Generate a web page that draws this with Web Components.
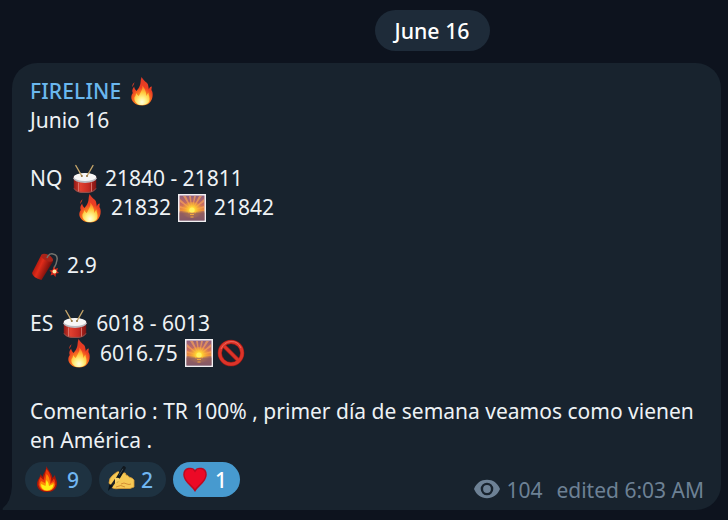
<!DOCTYPE html>
<html lang="es"><head><meta charset="utf-8"><title>FIRELINE</title>
<style>
html,body{margin:0;height:100%;background:#0d131e;overflow:hidden}
body{font-family:"Noto Sans","Open Sans",sans-serif;font-size:21px;color:#eef2f5}
</style></head><body>
<chat-view></chat-view>
<script>
const ICONS={
fire:`<svg viewBox="0 0 28 30"><defs><radialGradient id="f" gradientUnits="userSpaceOnUse" cx="14" cy="24" r="21"><stop offset="0" stop-color="#ffb52c"/><stop offset=".35" stop-color="#fb8020"/><stop offset=".6" stop-color="#ec3f22"/><stop offset="1" stop-color="#e03a26"/></radialGradient><radialGradient id="g" gradientUnits="userSpaceOnUse" cx="14" cy="26" r="15"><stop offset="0" stop-color="#fffde0"/><stop offset=".3" stop-color="#fff28a"/><stop offset=".65" stop-color="#ffc73a"/><stop offset="1" stop-color="#fb7a28"/></radialGradient></defs><g transform="translate(1.100 0) scale(.92 1)"><path fill="url(#f)" d="M13.500 1C12 5 13 7 11.500 10 10.500 12 9.500 13.500 8 15 7 13.500 5.500 12.500 5.500 10.500 3.500 13 3 15 4 17 1.500 20 2 24 5 26.500 8 30 19 30.500 22 27 26 24 26.500 17 24.500 14.500 24 13.500 24.500 12 24.800 10.500 23 10.500 22 11.800 21.500 13.500 21 11 21 8.500 19.500 7 16.500 5 15 3 13.500 1zM3.500 11Q3 8 6 6.300 5 9 3.500 11z"/><path fill="url(#g)" d="M14.500 9.500Q15 13 12.500 16.500L10.500 20Q8.500 19 8 17 7 20 6 21C5 24 7 27 10 28.500 14 30 21 28.500 22 25 23 22 21 19 21 16.500Q19.500 18 18.800 20 18.500 14 14.500 9.500z"/></g></svg>`,
drum:`<svg viewBox="0 0 28 30"><defs><linearGradient id="r"><stop stop-color="#8f1a17"/><stop offset=".3" stop-color="#e0402f"/><stop offset=".65" stop-color="#c62b22"/><stop offset="1" stop-color="#7d1514"/></linearGradient></defs><path fill="url(#r)" d="M2.800 12v12.500q2 4.500 11.200 4.500t11.200-4.500V12z"/><path d="M3 24.300q2 4.200 11 4.200t11-4.200" fill="none" stroke="#8a5350" stroke-width="1"/><ellipse cx="14" cy="14.200" rx="11.700" ry="4.700" fill="#b9bac0"/><ellipse cx="14" cy="13" rx="11.300" ry="4" fill="#f7f7f7"/><path d="M7.500 18.500v9M20.500 18.500v9" stroke="#df8078" stroke-width=".8"/><path d="M4.800 1.500L10.800 12M22 1.500L16 12" stroke="#c6a66a" stroke-width="1.400" stroke-linecap="round"/><circle cx="10.800" cy="12" r="1" fill="#927342"/><circle cx="16" cy="12" r="1" fill="#927342"/></svg>`,
sun:`<svg viewBox="0 0 28 28"><defs><linearGradient id="s" x2="0" y2="1"><stop stop-color="#8f607f"/><stop offset=".35" stop-color="#c86c61"/><stop offset=".63" stop-color="#f09437"/><stop offset=".64" stop-color="#b67257"/><stop offset="1" stop-color="#6d5778"/></linearGradient><radialGradient id="u" gradientUnits="userSpaceOnUse" cx="14" cy="16" r="11"><stop stop-color="#fff45b"/><stop offset=".3" stop-color="#ffd233"/><stop offset="1" stop-color="#ff9b29" stop-opacity="0"/></radialGradient></defs><path fill="#f2f0f2" d="M0 0h28v28H0z"/><path fill="url(#s)" d="M1.500 1.500h25v25h-25z"/><path d="M14 16L2 5v3zM14 16L5 2h3zM14 16L11 2h2zM14 16L16 2h2zM14 16L21 2h3zM14 16L26 5v3zM14 16L2 12v2zM14 16l12-4v2z" fill="#ffa653" opacity=".65"/><ellipse cx="14" cy="16" rx="11" ry="8" fill="url(#u)"/><path fill="#8c5a62" opacity=".75" d="M1.500 18.500h25v8h-25z"/><path stroke="#f4a640" stroke-width="1" d="M10 18.700h8M12 20.500h4M12.500 23h3"/><circle cx="14" cy="16" r="2.600" fill="#fff260"/></svg>`,
dynamite:`<svg viewBox="0 0 28 28"><defs><linearGradient id="d" gradientUnits="userSpaceOnUse" x1="4" y1="12" x2="17" y2="18"><stop stop-color="#a9150d"/><stop offset=".4" stop-color="#e02c1a"/><stop offset="1" stop-color="#79100d"/></linearGradient></defs><path fill="url(#d)" d="M10.500 2.500L1 21q1 5 9.500 7L22 9.500z"/><ellipse cx="16.200" cy="5.800" rx="6.400" ry="3.100" transform="rotate(27 16.200 5.800)" fill="#a92419"/><path d="M16 6Q18 1 22 2q5 1 4 6-.5 4-3 8" fill="none" stroke="#74736d" stroke-width="1.500"/><path fill="#db2a1b" d="M23 14l1 3 3-1-1 3 2 2-3 .5-.5 3.500-2-2.500-3 1 1-3-2-2 3-.5z"/><circle cx="23.500" cy="19.500" r="2" fill="#ffe8a5"/></svg>`,
no:`<svg viewBox="0 0 28 28"><circle cx="14" cy="14" r="11.200" fill="none" stroke="#9e1915" stroke-width="4.200"/><path d="M6 6l16 16" stroke="#a51a16" stroke-width="4.200"/><circle cx="14" cy="14" r="11.200" fill="none" stroke="#dc3429" stroke-width="3"/><path d="M6 6l16 16" stroke="#dc3429" stroke-width="3"/><path d="M4 10Q7 3 14 2.500T24 9" stroke="#ef7266" fill="none" stroke-width=".8"/></svg>`,
flame:`<svg viewBox="0 0 22 28"><path fill="#a81608" d="M10.500 1C10 6 7.500 8 6.500 12L4.500 9C4.500 12 1 15 1 19c0 5 4 8 10 8s10-3 10-9c0-3-2-5-2-8l-2.500 3C16 8 11.500 5 10.500 1z"/><path fill="#ee3b0b" d="M10.500 4Q9 9 7.500 15L4.500 12Q2 16 2.500 20 4 26 11 26t8.500-6.500q0-3-1.500-6L15.500 17Q15 9 10.500 4z"/><path fill="#ff8a07" d="M10.500 9L9 18l-4-2Q3 19 4 21q2 5 7 5 6 0 7.500-5 .5-2-1-4L14 19Q14 12 10.500 9z"/><path fill="#ffef16" d="M10.500 15L9.500 21 5 19q0 6 6 6.500 6-.5 6.500-6.500L13 21q0-3-2.500-6z"/></svg>`,
hand:`<svg viewBox="0 0 28 26"><path fill="#f6c954" stroke="#d99b35" stroke-width=".8" d="M2 17Q2 12 6 9l4-3q2-1 3 1l3 0q3-1 3 2 2 0 3 2 4 1 5 3v7l-4 1.500H12Q5 23.500 4 20z"/><path d="M14 18q3-2 6 0 2 1 4 0M9 21q5-3 9 0" fill="none" stroke="#d58f35" stroke-width="1"/><path d="M17 2L9.500 14.500" stroke="#10171d" stroke-width="3.600" stroke-linecap="round"/><path d="M9.500 13L3 22" stroke="#202326" stroke-width="2.600"/><path d="M1 25l1.500-7 3.300 2z" fill="#071018"/><path d="M8 12q5-1 5 2l-5 4" fill="#f9d265"/><path d="M16 2.800l-4 6.500" stroke="#53616b" stroke-width=".7"/></svg>`,
heart:`<svg viewBox="0 0 26 26"><path fill="#ec0926" stroke="#bc0920" stroke-width="1.500" d="M13 24.500C10 19 1.500 15.500 1.500 8 1.500 .5 10.500-.2 13 4.200 15.500-.2 24.500 .5 24.500 8 24.500 15.500 16 19 13 24.500z"/></svg>`,
eye:`<svg viewBox="0 0 26 20"><path fill="#6d8195" fill-rule="evenodd" d="M0 10C2.500 4 7 .8 13 .8S23.500 4 26 10c-2.500 6-7 9.200-13 9.200S2.500 16 0 10zM13 3.700a6.300 6.300 0 1 0 0 12.600 6.300 6.300 0 0 0 0-12.600z"/><circle cx="13" cy="10" r="3.900" fill="#6d8195"/></svg>`};
class PicIcon extends HTMLElement{constructor(){super();this.attachShadow({mode:'open'}).innerHTML=`<style>:host{display:block;flex:none;width:28px;height:28px}svg{display:block;width:100%;height:100%}</style>${ICONS[this.getAttribute('name')]}`}}
class DateChip extends HTMLElement{constructor(){super();this.attachShadow({mode:'open'}).innerHTML=`<style>:host{box-sizing:border-box;width:115px;height:41px;border-radius:21px;background:#1e2b39;color:#fff;display:flex;align-items:center;justify-content:center;font-weight:500;font-size:21.300px;line-height:40px;padding-right:1px}</style><slot></slot>`}}
class TextLine extends HTMLElement{constructor(){super();this.attachShadow({mode:'open'}).innerHTML=`<style>:host{display:flex;align-items:center;height:29.1px;line-height:29px;white-space:pre}</style><slot></slot>`}}
class ReactionPill extends HTMLElement{constructor(){super();this.attachShadow({mode:'open'}).innerHTML=`<style>:host{box-sizing:border-box;display:flex;align-items:center;justify-content:space-between;width:67px;height:35px;border-radius:18px;background:#1e3241;color:#70b6f2;padding:0 13px 0 11px;font-size:21px;font-weight:500;line-height:35px}:host([active]){background:#479acf;color:#fff;padding:0 13px 0 9px}:host([wide]){padding-left:8px}span{padding-top:2px}</style><slot name="icon"></slot><span><slot></slot></span>`}}
class MessageBubble extends HTMLElement{constructor(){super();this.attachShadow({mode:'open'}).innerHTML=`<style>:host{box-sizing:border-box;display:block;position:relative;width:709px;height:447px;margin:12px 0 0 12px;padding:13.700px 18px 0;border-radius:25px 25px 25px 0;background:#18232e}.tail{position:absolute;left:-10px;bottom:0;width:11px;height:24px}footer{display:flex;justify-content:space-between;margin:6.800px -1px 0 -5px}.pills{display:flex;gap:7px}</style><svg class="tail" viewBox="0 0 11 24"><path fill="#18232e" d="M11 0v24H1q-1-1 0-2Q9 16 10 0z"/></svg><slot></slot><footer><div class="pills"><slot name="reaction"></slot></div><slot name="meta"></slot></footer>`}}
class MessageMeta extends HTMLElement{constructor(){super();this.attachShadow({mode:'open'}).innerHTML=`<style>:host{display:flex;align-items:center;height:30px;margin-top:13px;color:#6d8195;font-size:21px;line-height:30px;white-space:pre}pic-icon{width:26px;height:20px;margin:-2px 6px 0 0}.time{margin-left:14px}</style><pic-icon name="eye"></pic-icon><slot></slot><span class="time"><slot name="time"></slot></span>`}}
class ChatView extends HTMLElement{constructor(){super();this.attachShadow({mode:'open'}).innerHTML=`<style>
:host{display:block;width:728px;height:520px}
header{display:flex;padding:10px 0 0 375px}
.name{color:#6ab7ee;font-weight:500;letter-spacing:.15px}
.fire,.drum{height:30px}
</style><header><date-chip>June 16</date-chip></header>
<message-bubble>
<text-line><span class="name">FIRELINE</span><pic-icon name="fire" class="fire" style="margin-left:7px"></pic-icon></text-line>
<text-line>Junio 16</text-line><text-line></text-line>
<text-line><span>NQ</span><pic-icon name="drum" class="drum" style="margin:0 6px 0 8.500px"></pic-icon><span>21840 - 21811</span></text-line>
<text-line><pic-icon name="fire" class="fire" style="margin:0 7px 0 46px"></pic-icon><span>21832</span><pic-icon name="sun" style="margin:0 8px 0 7px"></pic-icon><span>21842</span></text-line>
<text-line></text-line>
<text-line><pic-icon name="dynamite" style="margin:0 8px 0 1px"></pic-icon><span>2.9</span></text-line>
<text-line></text-line>
<text-line><span>ES</span><pic-icon name="drum" class="drum" style="margin:0 7px 0 8px"></pic-icon><span>6018 - 6013</span></text-line>
<text-line><pic-icon name="fire" class="fire" style="margin:0 7px 0 35px"></pic-icon><span>6016.75</span><pic-icon name="sun" style="margin:0 4px 0 7px"></pic-icon><pic-icon name="no"></pic-icon></text-line>
<text-line></text-line>
<text-line>Comentario : TR 100% , primer día de semana veamos como vienen</text-line>
<text-line>en América .</text-line>
<reaction-pill slot="reaction"><pic-icon slot="icon" name="flame" style="width:22px"></pic-icon>9</reaction-pill>
<reaction-pill slot="reaction" wide><pic-icon slot="icon" name="hand" style="height:26px"></pic-icon>2</reaction-pill>
<reaction-pill slot="reaction" active><pic-icon slot="icon" name="heart" style="width:26px;height:25px"></pic-icon>1</reaction-pill>
<message-meta slot="meta">104<span slot="time">edited 6:03 AM</span></message-meta>
</message-bubble>`}}
for(const [n,c] of [['pic-icon',PicIcon],['date-chip',DateChip],['text-line',TextLine],['reaction-pill',ReactionPill],['message-meta',MessageMeta],['message-bubble',MessageBubble],['chat-view',ChatView]])customElements.define(n,c);
</script></body></html>
